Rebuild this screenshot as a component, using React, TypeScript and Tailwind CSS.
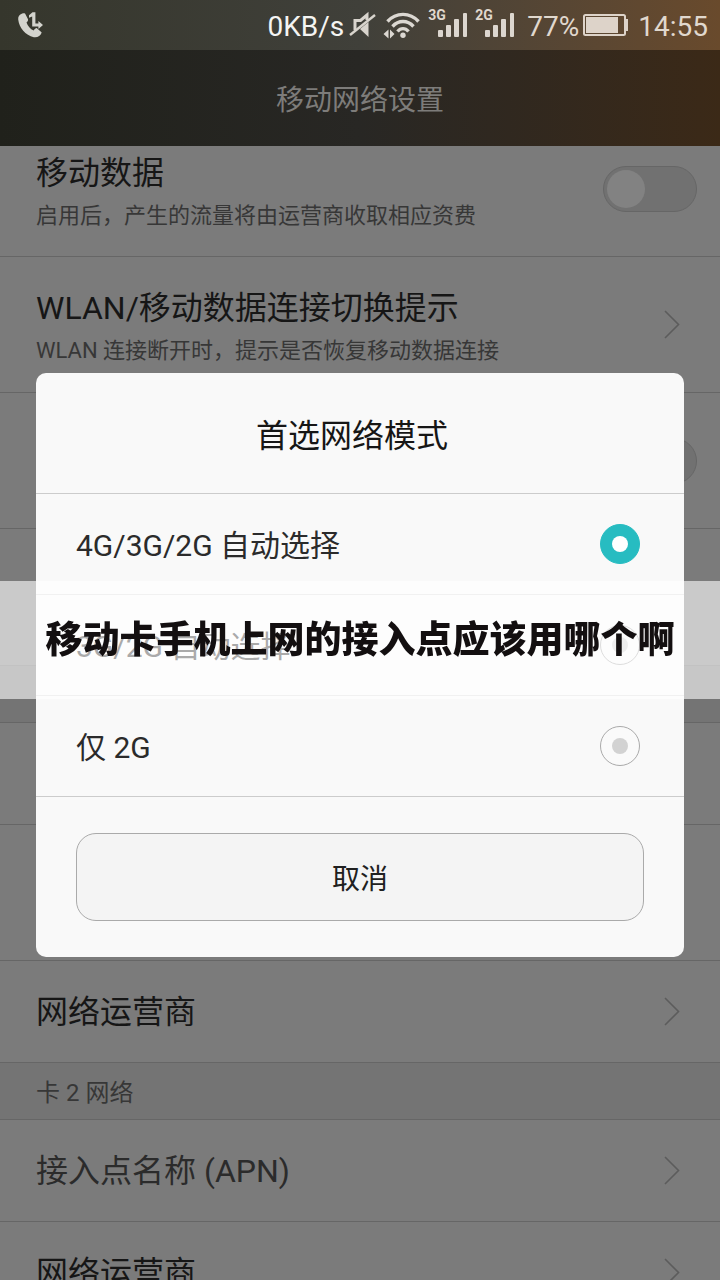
import { useState } from "react";

const Chevron = () => (
  <svg width="16" height="30" viewBox="0 0 16 30" fill="none" stroke="#5c5c5c" strokeWidth="1.6">
    <path d="M1 1l13.5 13.5L1 28" />
  </svg>
);

const CallIcon = () => (
  <svg width="26" height="27" viewBox="0 0 26 27" fill="#d3d3cd">
    <path d="M5.2 1.6C2.4 2.4.9 4.8 1.2 7.5c.9 8.5 7.3 15.8 15.6 17.7 3.3.7 6.9-1.2 7.9-4.7l-5-4.4c-1.3.3-2.3 1.2-3 2.5-3.4-1.7-6-4.7-7.2-8.2 1.2-.8 1.7-1.9 1.5-3.1L8.2 1.8c-.7-.8-1.8-.6-3-.2z" />
    <path d="M15.5.2h2.9v11.2h3V9l4.6 4-4.6 4v-2.4h-6.200V4.600l-3.200 1.200V3.200z" />
  </svg>
);

const MuteIcon = () => (
  <svg width="27" height="28" viewBox="0 0 27 28" fill="none" stroke="#d8d4cd">
    <path d="M1 24L26 4" strokeWidth="2.4" />
    <path d="M6 19V9.5h5.5L18 4v5" strokeWidth="3" />
    <path d="M19.5 11v15L11 18z" fill="#d8d4cd" stroke="none" />
  </svg>
);

const WifiIcon = () => (
  <svg width="38" height="28" viewBox="0 0 38 28" fill="none" stroke="#dcd8d2" strokeWidth="3.4">
    <path d="M4.5 10.5c8.5-9.5 22.5-9.5 31 0" />
    <path d="M9.5 15.5c6-6.6 15-6.6 21 0" />
    <path d="M14.5 20.5c3.3-3.8 7.7-3.8 11 0" />
    <circle cx="20" cy="24.3" r="2.7" fill="#dcd8d2" stroke="none" />
    <path d="M5.5 18.5v9L.5 23zM7 18.5v9l4.5-4.5z" fill="#dcd8d2" stroke="none" />
  </svg>
);

const Signal = ({ label }: { label: string }) => (
  <span className="relative flex h-7 w-10 items-end justify-end">
    <span className="absolute left-0 -top-1 text-sm leading-4 font-bold">{label}</span>
    <svg width="31" height="28" viewBox="0 0 31 28" fill="#dcd6cf">
      <rect x="1" y="19" width="5" height="7" rx="1" />
      <rect x="9" y="14" width="5" height="12" rx="1" />
      <rect x="17" y="8" width="5" height="18" rx="1" />
      <rect x="26" y="2" width="4" height="24" rx="1" />
    </svg>
  </span>
);

const BatteryIcon = () => (
  <svg width="46" height="24" viewBox="0 0 46 24" fill="none">
    <rect x="1" y="2" width="41" height="20" rx="1.5" stroke="#ddd3c9" strokeWidth="2" />
    <rect x="3" y="4" width="32" height="16" fill="#ddd3c9" />
    <rect x="43" y="6" width="2" height="12" fill="#ddd3c9" />
  </svg>
);

const Toggle = ({ label }: { label: string }) => (
  <input
    type="checkbox"
    role="switch"
    aria-label={label}
    className="h-[46px] w-[94px] shrink-0 appearance-none rounded-full border border-[#666666] bg-[#717171] p-[3px] before:block before:size-[38px] before:rounded-full before:bg-[#828282] checked:before:ml-auto"
  />
);

interface RowProps {
  title: string;
  summary?: string;
  muted?: boolean;
}

const LinkRow = ({ title, summary, muted }: RowProps) => (
  <a
    href="#"
    className={`flex shrink-0 items-center justify-between border-b border-[#666666] pr-10 pl-9 ${summary ? "h-[136px]" : "h-[102px]"}`}
  >
    <span className={summary ? "pt-1" : ""}>
      <span className={`block text-[32px] leading-[48px] ${muted ? "text-[#2b2b2b]" : "text-[#161616]"}`}>
        {title}
      </span>
      {summary && <span className="block text-[22px] leading-[38px] text-[#373737]">{summary}</span>}
    </span>
    <Chevron />
  </a>
);

const modes = ["4G/3G/2G 自动选择", "3G/2G 自动选择", "仅 2G"];

const ModeDialog = () => {
  const [selected, setSelected] = useState(0);

  return (
    <div className="fixed inset-x-0 top-[50px] bottom-0 z-20 flex items-center px-9">
      <div role="dialog" aria-labelledby="mode-title" className="w-full rounded-[10px] bg-[#f9f9f9]">
        <h2
          id="mode-title"
          className="flex h-[121px] items-center justify-center border-b border-[#cccccc] pt-1.5 pr-4 text-[32px] text-[#161616]"
        >
          首选网络模式
        </h2>
        {modes.map((mode, i) => (
          <label
            key={mode}
            className="flex h-[101px] items-center justify-between border-b border-[#dddddd] pr-11 pl-10 text-[30px] text-[#2b2b2b] last-of-type:border-[#cccccc]"
          >
            <span className="pt-0.5">{mode}</span>
            <input
              type="radio"
              name="mode"
              checked={selected === i}
              onChange={() => setSelected(i)}
              className="grid size-10 appearance-none place-items-center rounded-full border border-[#aaaaaa] bg-[#fafafa] before:size-4 before:rounded-full before:bg-[#d2d2d2] checked:border-[#27bcc1] checked:bg-[#27bcc1] checked:before:bg-white"
            />
          </label>
        ))}
        <div className="px-10 py-9">
          <button
            type="button"
            className="h-[88px] w-full rounded-[20px] border border-[#aaaaaa] bg-[#f4f4f4] pt-1.5 text-[28px] text-[#202020]"
          >
            取消
          </button>
        </div>
      </div>
    </div>
  );
};

export default function App() {
  return (
    <div className="flex h-screen flex-col overflow-hidden bg-[#7b7b7b] font-['Roboto','Noto_Sans_CJK_SC',sans-serif]">
      <div className="z-10 flex h-[50px] shrink-0 items-center bg-linear-to-r from-[#35362c] via-[#40403a] to-[#694a2c] pr-3 pl-[17px] text-[28px] text-[#e0d8ce]">
        <CallIcon />
        <span className="ml-auto pt-1 text-[#f4f4f2]">0KB/s</span>
        <span className="ml-[5px] flex items-center gap-[7px]">
          <MuteIcon />
          <WifiIcon />
          <Signal label="3G" />
          <Signal label="2G" />
        </span>
        <span className="ml-3 pt-1">77%</span>
        <span className="ml-1">
          <BatteryIcon />
        </span>
        <span className="ml-[9px] pt-1">14:55</span>
      </div>
      <header className="z-10 flex h-24 shrink-0 items-center justify-center bg-linear-to-r from-[#20211b] via-[#282724] to-[#3b2917]">
        <h1 className="pt-1.5 text-[28px] text-[#7d7c7a]">移动网络设置</h1>
      </header>

      {/* list is scrolled a little under the header */}
      <main className="-mt-[25px] flex flex-col">
        <div className="flex h-[136px] shrink-0 items-center justify-between border-b border-[#666666] pr-[23px] pl-9">
          <div className="pt-1.5">
            <div className="text-[32px] leading-[48px] text-[#161616]">移动数据</div>
            <div className="text-[22px] leading-[38px] text-[#373737]">
              启用后，产生的流量将由运营商收取相应资费
            </div>
          </div>
          <Toggle label="移动数据" />
        </div>
        <LinkRow title="WLAN/移动数据连接切换提示" summary="WLAN 连接断开时，提示是否恢复移动数据连接" />
        <div className="flex h-[136px] shrink-0 items-center justify-end border-b border-[#666666] pr-[23px]">
          <Toggle label="数据" />
        </div>
        <div className="h-[137px] shrink-0 border-b border-[#666666]" />
        <div className="h-[57px] shrink-0 border-b border-[#666666] bg-[#747474]" />
        <div className="h-[102px] shrink-0 border-b border-[#666666]" />
        <div className="h-[136px] shrink-0 border-b border-[#666666]" />
        <LinkRow title="网络运营商" />
        <h2 className="flex h-[57px] shrink-0 items-center border-b border-[#666666] bg-[#747474] pt-1 pl-9 text-2xl text-[#373737]">
          卡 2 网络
        </h2>
        <LinkRow title="接入点名称 (APN)" muted />
        <LinkRow title="网络运营商" />
      </main>

      <ModeDialog />

      <div className="pointer-events-none fixed inset-0 z-30 flex items-center">
        <p className="flex h-[118px] w-full items-center justify-center bg-white/60 pt-0.5 text-[37px] font-black whitespace-nowrap text-[#130f10]">
          移动卡手机上网的接入点应该用哪个啊
        </p>
      </div>
    </div>
  );
}
